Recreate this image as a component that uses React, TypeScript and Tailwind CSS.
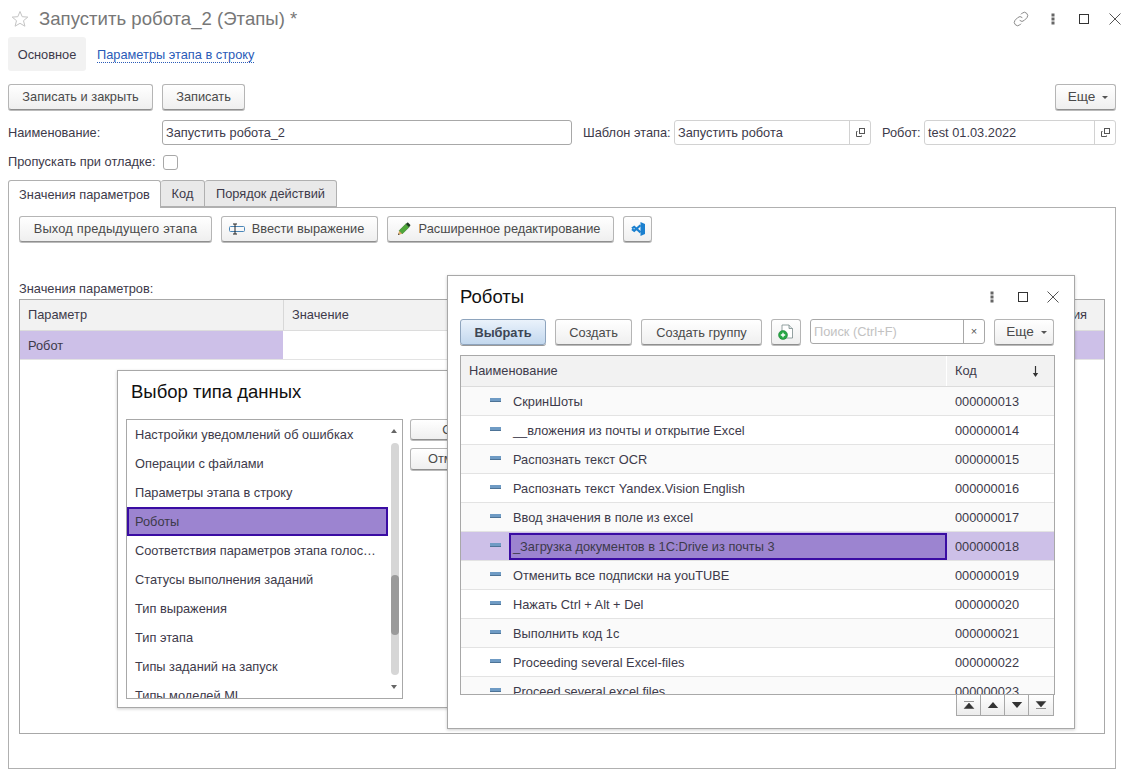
import React from "react";

const btn = "flex items-center justify-center rounded-[3px] border border-[#b5b5b5] border-b-[#8f8f8f] bg-gradient-to-b from-white to-[#efefef] shadow-[0_1px_0_#bbb] text-[#4a4a4a] whitespace-nowrap";

function Star() {
  return (
    <svg width="18" height="18" viewBox="0 0 18 18" fill="none" stroke="#c4c4c4" strokeWidth="1">
      <path d="M9 1.5l2.2 5.2 5.6.4-4.3 3.6 1.4 5.5L9 13.3l-4.9 2.9 1.4-5.5L1.2 7.1l5.6-.4z" />
    </svg>
  );
}

function Dots() {
  return (
    <svg width="4" height="12" viewBox="0 0 4 12" fill="#666">
      <rect x="0.5" y="0.5" width="3" height="3" />
      <rect x="0.5" y="4.5" width="3" height="3" />
      <rect x="0.5" y="8.5" width="3" height="3" />
    </svg>
  );
}

function Maxi() {
  return <div className="w-[10px] h-[10px] border-[1.5px] border-[#333]" />;
}

function Close() {
  return (
    <svg width="12" height="12" viewBox="0 0 12 12" stroke="#555" strokeWidth="1">
      <path d="M0.5 0.5l11 11M11.5 0.5l-11 11" />
    </svg>
  );
}

function OpenIcon() {
  return (
    <svg width="9" height="9" viewBox="0 0 9 9" fill="none" stroke="#555" strokeWidth="1">
      <rect x="3.5" y="0.5" width="5" height="5" />
      <path d="M1.5 3.5h-1v5h5v-1" />
    </svg>
  );
}

function Caret() {
  return <span className="inline-block ml-[7px] w-0 h-0 border-l-[3px] border-r-[3px] border-t-[3px] border-l-transparent border-r-transparent border-t-[#555]" />;
}

function Row({ name, code, odd, selected }: { name: string; code: string; odd: boolean; selected?: boolean }) {
  return (
    <div className={`flex h-[29px] shrink-0 border-b border-[#e3e3e3] ${selected ? "bg-[#cdc0e8]" : odd ? "bg-[#fafafa]" : "bg-white"}`}>
      <div className="w-[486px] shrink-0 flex items-center pl-[29px]">
        <div className="w-[11px] h-[4px] bg-[#6f9bc4] border-b border-[#4d7396] mr-[12px] mb-[3px]" />
        {selected ? (
          <div className="h-[27px] flex-1 flex items-center border-2 border-[#3a0ca3] -ml-[4px] pl-[2px] pt-[1px] bg-[#9c84d0]">{name}</div>
        ) : (
          <span className="pt-[1px]">{name}</span>
        )}
      </div>
      <div className="flex-1 flex items-center pl-[8px] pt-[1px]">{code}</div>
    </div>
  );
}

const robots = [
  ["СкринШоты", "000000013"],
  ["__вложения из почты и открытие Excel", "000000014"],
  ["Распознать текст OCR", "000000015"],
  ["Распознать текст Yandex.Vision English", "000000016"],
  ["Ввод значения в поле из excel", "000000017"],
  ["_Загрузка документов в 1С:Drive из почты 3", "000000018"],
  ["Отменить все подписки на youTUBE", "000000019"],
  ["Нажать Ctrl + Alt + Del", "000000020"],
  ["Выполнить код 1с", "000000021"],
  ["Proceeding several Excel-files", "000000022"],
  ["Proceed several excel files", "000000023"],
];

const types = [
  "Настройки уведомлений об ошибках",
  "Операции с файлами",
  "Параметры этапа в строку",
  "Роботы",
  "Соответствия параметров этапа голос…",
  "Статусы выполнения заданий",
  "Тип выражения",
  "Тип этапа",
  "Типы заданий на запуск",
  "Типы моделей ML",
];

const pager = ["M1 0.5h10M6 2 1.2 7.5h9.6z", "M6 1 .8 7h10.4z", "M6 7 .8 1h10.4z", "M1 7.5h10M6 6 1.2.5h9.6z"];

export default function App() {
  return (
    <div className="relative w-[1129px] h-[772px] overflow-hidden bg-white text-[12.8px] text-[#3d3a4a]" style={{ fontFamily: '"Liberation Sans", Arial, sans-serif' }}>
      <div className="flex items-center h-[37px] pl-[11px] pr-[8px]">
        <Star />
        <div className="ml-[10px] text-[18.6px] text-[#777] flex-1">Запустить робота_2 (Этапы) *</div>
        <svg width="16" height="16" viewBox="0 0 24 24" fill="none" stroke="#777" strokeWidth="1.3" className="mr-[22px]">
          <path d="M10 14a5 5 0 0 0 7 0l4-4a5 5 0 0 0-7-7l-2 2" />
          <path d="M14 10a5 5 0 0 0-7 0l-4 4a5 5 0 0 0 7 7l2-2" />
        </svg>
        <Dots />
        <div className="ml-[24px]"><Maxi /></div>
        <div className="ml-[20px]"><Close /></div>
      </div>

      <div className="flex items-center h-[34px] pl-[8px]">
        <div className="w-[78px] h-[34px] pt-[2px] bg-[#f2f2f2] rounded-[3px] flex items-center justify-center">Основное</div>
        <div className="ml-[11px] text-[#2a5bb8] border-b border-dotted border-[#2a5bb8] leading-[15px] mt-[2px]">Параметры этапа в строку</div>
      </div>

      <div className="flex h-[26px] mt-[13px] px-[8px] mr-[5px]">
        <div className={`${btn} w-[145px]`}>Записать и закрыть</div>
        <div className={`${btn} w-[83px] ml-[9px]`}>Записать</div>
        <div className={`${btn} w-[61px] ml-auto pl-[5px] text-[13.6px]`}>Еще<Caret /></div>
      </div>

      <div className="flex items-center h-[25px] mt-[10px] pl-[8px]">
        <div className="w-[154px]">Наименование:</div>
        <div className="w-[410px] h-[25px] border border-[#a8a8a8] rounded-[3px] flex items-center pl-[3px]">Запустить робота_2</div>
        <div className="ml-[11px] w-[91px]">Шаблон этапа:</div>
        <div className="w-[197px] h-[25px] border border-[#d2d2d2] rounded-[3px] flex items-center pl-[3px]">
          <span className="flex-1">Запустить робота</span>
          <div className="w-[21px] h-full border-l border-[#d2d2d2] flex items-center justify-center"><OpenIcon /></div>
        </div>
        <div className="ml-[11px] w-[42px]">Робот:</div>
        <div className="w-[192px] h-[25px] border border-[#d2d2d2] rounded-[3px] flex items-center pl-[3px]">
          <span className="flex-1">test 01.03.2022</span>
          <div className="w-[21px] h-full border-l border-[#d2d2d2] flex items-center justify-center"><OpenIcon /></div>
        </div>
      </div>

      <div className="flex items-center h-[16px] mt-[9px] pl-[8px]">
        <div className="w-[155px]">Пропускать при отладке:</div>
        <div className="w-[15px] h-[15px] border border-[#a8a8a8] rounded-[3px]" />
      </div>

      <div className="flex h-[28px] mt-[10px] ml-[8px] relative z-10">
        <div className="w-[153px] h-[28px] border border-[#b0b0b0] border-b-0 rounded-t-[3px] bg-white flex items-center justify-center">Значения параметров</div>
        <div className="w-[44px] h-[27px] border border-l-0 border-[#b0b0b0] bg-[#e9e9e9] rounded-t-[3px] flex items-center justify-center">Код</div>
        <div className="w-[132px] h-[27px] border border-l-0 border-[#b0b0b0] bg-[#e9e9e9] rounded-t-[3px] flex items-center justify-center">Порядок действий</div>
      </div>

      <div className="ml-[8px] -mt-[1px] w-[1108px] h-[562px] border border-[#b0b0b0] px-[10px] pt-[8px]">
        <div className="flex h-[26px] gap-[9px]">
          <div className={`${btn} w-[193px] tracking-[0.2px]`}>Выход предыдущего этапа</div>
          <div className={`${btn} w-[157px] pr-[6px]`}>
            <svg width="17" height="12" viewBox="0 0 17 12" fill="none" className="mr-[6px]">
              <rect x="0.5" y="3.5" width="15" height="5" rx="1" stroke="#4a86b8" />
              <path d="M4 1h4M6 1v10M4 11h4" stroke="#222" strokeWidth="1" />
            </svg>
            Ввести выражение
          </div>
          <div className={`${btn} w-[227px] pr-[4px]`}>
            <svg width="14" height="14" viewBox="0 0 14 14" className="mr-[8px]">
              <path d="M1 13l1.2-4.4 3.2 3.2z" fill="#e3b06a" />
              <path d="M2.2 8.6l6.6-6.6 3.2 3.2-6.6 6.6z" fill="#4fa83a" stroke="#2f7a22" strokeWidth="0.6" />
              <path d="M8.8 2l1.4-1.2c.4-.3.7-.3 1 0l2 2c.3.3.3.6 0 1L12 5.2z" fill="#1f3d20" />
              <path d="M1 13l.5-1.7 1.2 1.2z" fill="#333" />
            </svg>
            Расширенное редактирование
          </div>
          <div className={`${btn} w-[29px]`}>
            <svg width="16" height="16" viewBox="0 0 16 16">
              <path d="M10.5 1l4.5 2v10l-4.5 2z" fill="#1b80cf" />
              <path d="M10.5 4.2L4.2 9.8 2 8.2M10.5 11.4L4.2 5.8 2 7.4" fill="none" stroke="#1b80cf" strokeWidth="2.2" />
            </svg>
          </div>
        </div>

        <div className="mt-[37px] h-[21px]">Значения параметров:</div>

        <div className="w-[1086px] h-[435px] border border-[#a8a8a8] -mt-[1px]">
          <div className="flex h-[31px] bg-[#f2f2f2] border-b border-[#dcdcdc]">
            <div className="w-[264px] border-r border-[#d8d8d8] flex items-center pl-[8px]">Параметр</div>
            <div className="flex-1 flex items-center pl-[8px]">Значение</div>
            <div className="flex items-center pr-[17px]">Выражения</div>
          </div>
          <div className="flex h-[29px] border-b border-[#e3e3e3]">
            <div className="w-[263px] bg-[#cdc0e8] flex items-center pl-[8px] pt-[1px]">Робот</div>
            <div className="flex-1 bg-white" />
            <div className="w-[40px] bg-[#cdc0e8]" />
          </div>
        </div>
      </div>

      {/* Окно выбора типа */}
      <div className="absolute left-[117px] top-[370px] w-[400px] h-[338px] bg-white border border-[#a8a8a8] shadow-[0_1px_3px_rgba(0,0,0,0.2)]">
        <div className="pl-[13px] pt-[7px] h-[48px] text-[18.5px] text-[#111]">Выбор типа данных</div>
        <div className="flex ml-[8px]">
          <div className="relative shrink-0 w-[277px] h-[280px] border border-[#a8a8a8] overflow-hidden">
            {types.map((t) =>
              t === "Роботы" ? (
                <div key={t} className="h-[29px] w-[261px] bg-[#9c84d0] border-2 border-[#3a0ca3] pl-[6px] flex items-center">{t}</div>
              ) : (
                <div key={t} className="h-[29px] pl-[8px] flex items-center whitespace-nowrap">{t}</div>
              )
            )}
            <div className="absolute right-[3px] top-[23px] w-[8px] h-[232px] rounded-[4px] bg-[#d6d6d6]" />
            <div className="absolute right-[3px] top-[155px] w-[8px] h-[60px] rounded-[4px] bg-[#9a9a9a]" />
            <div className="absolute right-[5px] top-[9px] w-0 h-0 border-l-[3px] border-r-[3px] border-b-[4px] border-l-transparent border-r-transparent border-b-[#666]" />
            <div className="absolute right-[5px] bottom-[9px] w-0 h-0 border-l-[3px] border-r-[3px] border-t-[4px] border-l-transparent border-r-transparent border-t-[#666]" />
          </div>
          <div className="ml-[7px] flex flex-col gap-[8px]">
            <div className={`${btn} w-[82px] h-[21px]`}>ОК</div>
            <div className={`${btn} w-[82px] h-[22px]`}>Отмена</div>
          </div>
        </div>
      </div>

      {/* Окно Роботы */}
      <div className="absolute left-[447px] top-[275px] w-[628px] h-[454px] bg-white border border-[#a8a8a8] shadow-[0_1px_3px_rgba(0,0,0,0.2)]">
        <div className="flex items-center h-[42px] pl-[12px] pr-[15px] text-[#111]">
          <div className="text-[18.5px] flex-1">Роботы</div>
          <Dots />
          <div className="ml-[24px]"><Maxi /></div>
          <div className="ml-[19px]"><Close /></div>
        </div>
        <div className="flex h-[26px] ml-[12px] mt-[1px]">
          <div className="w-[86px] pt-[1px] flex items-center justify-center rounded-[3px] border border-[#8ea4bd] bg-gradient-to-b from-[#eaf2fb] to-[#c3d8ee] shadow-[0_1px_0_#999] font-bold text-[#3d4654]">Выбрать</div>
          <div className={`${btn} w-[77px] ml-[9px] pt-[1px]`}>Создать</div>
          <div className={`${btn} w-[121px] ml-[9px] pt-[1px]`}>Создать группу</div>
          <div className={`${btn} w-[30px] ml-[9px]`}>
            <svg width="16" height="16" viewBox="0 0 16 16">
              <path d="M4 1h7l3.5 3.5V14H4z" fill="#fff" stroke="#7a8a8a" strokeWidth="0.8" />
              <path d="M11 1v3.5h3.5" fill="#dfe6e6" stroke="#7a8a8a" strokeWidth="0.8" />
              <circle cx="5" cy="11" r="4.5" fill="#26a745" stroke="#1a7d33" strokeWidth="0.5" />
              <path d="M2.8 11h4.4M5 8.8v4.4" stroke="#fff" strokeWidth="1.3" />
            </svg>
          </div>
          <div className="w-[175px] h-[25px] ml-[9px] border border-[#a8a8a8] rounded-[3px] flex items-center pl-[3px] text-[#c2c2c2]">
            <span className="flex-1">Поиск (Ctrl+F)</span>
            <div className="w-[21px] h-full border-l border-[#a8a8a8] flex items-center justify-center text-[#555] text-[11px]">×</div>
          </div>
          <div className={`${btn} w-[60px] ml-[9px] pl-[5px] pt-[1px] text-[13.6px]`}>Еще<Caret /></div>
        </div>
        <div className="relative w-[595px] h-[340px] ml-[12px] mt-[10px] border border-[#a8a8a8] overflow-hidden">
          <div className="flex h-[31px] bg-[#f2f2f2] border-b border-[#dcdcdc]">
            <div className="w-[486px] border-r border-white flex items-center pl-[8px]">Наименование</div>
            <div className="flex-1 flex items-center pl-[8px]">
              <span className="flex-1">Код</span>
              <svg width="7" height="11" viewBox="0 0 7 11" className="mr-[15px]">
                <path d="M3.5 0v8" stroke="#333" strokeWidth="1.2" />
                <path d="M.8 7h5.4L3.5 11z" fill="#333" />
              </svg>
            </div>
          </div>
          {robots.map((r, i) => (
            <Row key={r[1]} name={r[0]} code={r[1]} odd={i % 2 === 0} selected={i === 5} />
          ))}
        </div>
        <div className="flex justify-end mr-[20px]">
          <div className="flex border border-t-0 border-[#a8a8a8] h-[21px] bg-gradient-to-b from-white to-[#ececec]">
            {pager.map((d, i) => (
              <div key={i} className={`w-[24px] flex items-center justify-center ${i < 3 ? "border-r border-[#a8a8a8]" : ""}`}>
                <svg width="12" height="8" viewBox="0 0 12 8" fill="#333" stroke={i === 0 || i === 3 ? "#333" : "none"} strokeWidth="0.5">
                  <path d={d} />
                </svg>
              </div>
            ))}
          </div>
        </div>
      </div>
    </div>
  );
}
